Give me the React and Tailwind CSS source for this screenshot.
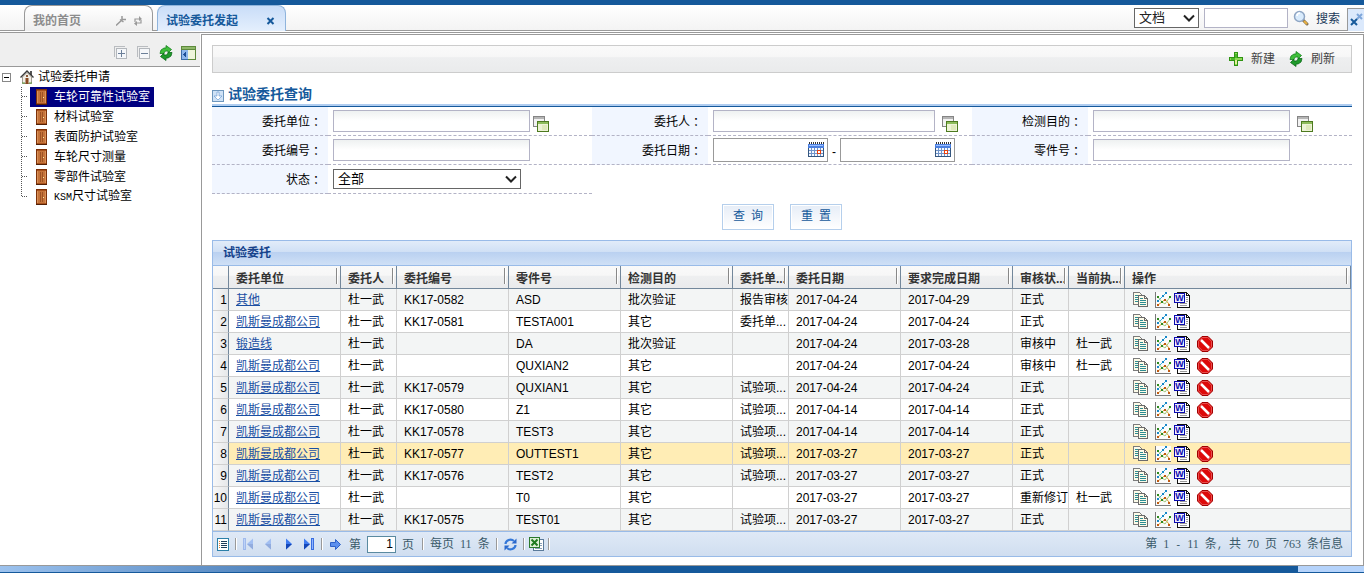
import React, { useState } from 'react';

const labs = ['车轮可靠性试验室', '材料试验室', '表面防护试验室', '车轮尺寸测量', '零部件试验室', 'KSM尺寸试验室'];

const columns = [
  { title: '委托单位', width: 'w-[112px]' },
  { title: '委托人', width: 'w-[56px]' },
  { title: '委托编号', width: 'w-[112px]' },
  { title: '零件号', width: 'w-[112px]' },
  { title: '检测目的', width: 'w-[112px]' },
  { title: '委托单...', width: 'w-[56px]' },
  { title: '委托日期', width: 'w-[112px]' },
  { title: '要求完成日期', width: 'w-[112px]' },
  { title: '审核状...', width: 'w-[56px]' },
  { title: '当前执...', width: 'w-[56px]' },
  { title: '操作', width: '' },
];

const KSM = '凯斯曼成都公司';
const rows = [
  { unit: '其他', code: 'KK17-0582', part: 'ASD', purpose: '批次验证', kind: '报告审核', date: '2017-04-24', due: '2017-04-29', status: '正式', current: '', stop: false },
  { unit: KSM, code: 'KK17-0581', part: 'TESTA001', purpose: '其它', kind: '委托单...', date: '2017-04-24', due: '2017-04-24', status: '正式', current: '', stop: false },
  { unit: '锻造线', code: '', part: 'DA', purpose: '批次验证', kind: '', date: '2017-04-24', due: '2017-03-28', status: '审核中', current: '杜一武', stop: true },
  { unit: KSM, code: '', part: 'QUXIAN2', purpose: '其它', kind: '', date: '2017-04-24', due: '2017-04-24', status: '审核中', current: '杜一武', stop: true },
  { unit: KSM, code: 'KK17-0579', part: 'QUXIAN1', purpose: '其它', kind: '试验项...', date: '2017-04-24', due: '2017-04-24', status: '正式', current: '', stop: true },
  { unit: KSM, code: 'KK17-0580', part: 'Z1', purpose: '其它', kind: '试验项...', date: '2017-04-14', due: '2017-04-14', status: '正式', current: '', stop: true },
  { unit: KSM, code: 'KK17-0578', part: 'TEST3', purpose: '其它', kind: '试验项...', date: '2017-04-14', due: '2017-04-14', status: '正式', current: '', stop: false },
  { unit: KSM, code: 'KK17-0577', part: 'OUTTEST1', purpose: '其它', kind: '试验项...', date: '2017-03-27', due: '2017-03-27', status: '正式', current: '', stop: true },
  { unit: KSM, code: 'KK17-0576', part: 'TEST2', purpose: '其它', kind: '试验项...', date: '2017-03-27', due: '2017-03-27', status: '正式', current: '', stop: true },
  { unit: KSM, code: '', part: 'T0', purpose: '其它', kind: '', date: '2017-03-27', due: '2017-03-27', status: '重新修订', current: '杜一武', stop: true },
  { unit: KSM, code: 'KK17-0575', part: 'TEST01', purpose: '其它', kind: '试验项...', date: '2017-03-27', due: '2017-03-27', status: '正式', current: '', stop: false },
];

// Digits in serif, other latin runs in half-width mono, Chinese in the normal font
const MonoText = ({ children }) => (
  <span className="whitespace-pre">
    {children.split(/(\d+|[\x20-\x2f\x3a-\x7e]+)/).map((part, i) => {
      if (i % 2 === 0) return part;
      return (
        <span
          key={i}
          className={/\d/.test(part) ? "font-['Liberation_Serif',serif]" : "font-['Liberation_Mono',monospace] text-[10px]"}
        >
          {part}
        </span>
      );
    })}
  </span>
);

const Svg = ({ w = 16, h = 16, crisp = true, children }) => (
  <svg
    width={w}
    height={h}
    viewBox={`0 0 ${w} ${h}`}
    fill="none"
    shapeRendering={crisp ? 'crispEdges' : 'auto'}
    className="block shrink-0"
    aria-hidden="true"
  >
    {children}
  </svg>
);

const RefreshIcon = () => (
  <Svg w={14} crisp={false}>
    <path d="M1 8.500L2 5L5 3H7V.5L12.500 4.500L9 8V6H6.500L4.500 8.500Z" fill="#3fbf3a" stroke="#15801f" strokeWidth=".8" />
    <path d="M13 7.500L12 11L9 13H7V15.500L1.500 11.500L5 8V10H7.500L9.500 7.500Z" fill="#1f9a2b" stroke="#0b6a18" strokeWidth=".8" />
  </Svg>
);

const ExpandIcon = ({ plus }) => (
  <Svg w={14} h={14}>
    <path d="M.5 11V.5H11" stroke="#b9bcc0" />
    <rect x="2.500" y="2.500" width="10" height="10" fill="#f5f7fa" stroke="#b3b7bc" />
    <path d={plus ? 'M4 7.500H11M7.500 4V11' : 'M4 7.500H11'} stroke="#6b7f99" />
  </Svg>
);

const PanelIcon = () => (
  <Svg w={15} h={14}>
    <rect width="15" height="14" fill="#5d8a3c" />
    <rect x="1" y="1" width="13" height="2" fill="#8fb86a" />
    <rect x="0" y="4" width="7" height="10" fill="#3b6ea8" />
    <rect x="1" y="4" width="6" height="9" fill="#8db8ec" />
    <rect x="7" y="4" width="7" height="9" fill="#eef5dc" />
    <path d="M2 8.500L5 5.500V11.500Z" fill="#1d4f96" />
  </Svg>
);

const HouseIcon = () => (
  <Svg w={14} h={14} crisp={false}>
    <rect x="10" y="1" width="2" height="4" fill="#555" />
    <path d="M2.500 7L7 2.500L11.500 7V13.500H2.500Z" fill="#f1eee6" stroke="#8b8577" strokeWidth=".8" />
    <path d="M.5 7.500L7 1L13.500 7.500" stroke="#3a3a3a" strokeWidth="1.400" />
    <rect x="5.500" y="8" width="3" height="6" fill="#8a4a22" />
    <rect x="6" y="5" width="2" height="2" fill="#8a5a3a" />
    <path d="M2 13H5M9 13H12" stroke="#5d9a3a" />
  </Svg>
);

const DoorIcon = () => (
  <Svg w={11} h={16}>
    <rect x=".5" y=".5" width="10" height="15" fill="#a9531d" stroke="#7d3008" />
    <rect x="2" y="2" width="7" height="12" fill="#c5733a" />
    <path d="M4.500 3V13M6.500 3V13" stroke="#9c5223" />
    <path d="M1.500 2V14M9.500 2V14" stroke="#d9925a" />
    <rect x="7" y="8" width="1" height="1" fill="#ffe9a0" />
    <path d="M0 15.500H11" stroke="#521f06" />
  </Svg>
);

const LookupIcon = () => (
  <Svg>
    <rect x=".5" y=".5" width="11" height="10" fill="#f2f2f2" stroke="#858585" />
    <rect x="1" y="1" width="10" height="2" fill="#b5b5b5" />
    <rect x="4.500" y="5.500" width="11" height="10" fill="#edf3d6" stroke="#4d7a1f" />
    <rect x="5" y="6" width="10" height="2" fill="#8dbb5a" />
    <rect x="9" y="9" width="5" height="5" fill="#dfe9bb" />
  </Svg>
);

const CalendarIcon = () => (
  <Svg>
    <path d="M1 1H16" stroke="#333" strokeWidth="2" strokeDasharray="1 1" />
    <rect x="0" y="2" width="16" height="13" fill="#f4f8ff" />
    <rect x="0" y="2" width="16" height="4" fill="#4a7fe0" />
    <rect x="1" y="3" width="14" height="1" fill="#9cc0ff" />
    <path d="M0 8.500H16M0 11.500H16M3.500 6V15M6.500 6V15M9.500 6V15M12.500 6V15" stroke="#6f93c8" />
    <path d="M.5 6V15M0 14.500H16M15.500 6V15" stroke="#34567f" />
    <rect x="9.500" y="8.500" width="3" height="3" fill="#fff" stroke="#e8400c" />
  </Svg>
);

const MagnifierIcon = () => (
  <Svg crisp={false}>
    <path d="M10 10L14 14" stroke="#7a6a50" strokeWidth="3" strokeLinecap="round" />
    <path d="M11.500 11.500L13.500 13.500" stroke="#e8b040" strokeWidth="2" strokeLinecap="round" />
    <circle cx="6.500" cy="6.500" r="5" fill="#d9ebfc" stroke="#8fa6c4" strokeWidth="1.500" />
    <path d="M4 6a3 3 0 0 1 3-3" stroke="#fff" strokeWidth="1.500" />
  </Svg>
);

const PlusIcon = () => (
  <Svg w={14} h={14}>
    <path d="M5.500 .5H8.500V5.500H13.500V8.500H8.500V13.500H5.500V8.500H.5V5.500H5.500Z" fill="#8fd858" stroke="#2f9412" />
    <path d="M2 7H6M7 2V6" stroke="#4cb82a" strokeWidth="2" />
    <path d="M7 8V12" stroke="#e4ef9a" strokeWidth="2" />
  </Svg>
);

const CopyIcon = () => (
  <Svg>
    <path d="M.5 .5H6.500L9.500 3.500V12.500H.5Z" fill="#fdfbe8" stroke="#7b7b7b" />
    <path d="M2 3.500H5M2 5.500H5M2 7.500H5M2 9.500H5" stroke="#2c8c92" />
    <path d="M5.500 3.500H11.500L14.500 6.500V14.500H5.500Z" fill="#fdfbe8" stroke="#6b6b6b" />
    <path d="M7 6.500H10M7 8.500H13M7 10.500H13M7 12.500H13" stroke="#2c8c92" />
    <path d="M11.500 4V6.500H14" stroke="#6b6b6b" />
  </Svg>
);

const ChartIcon = () => (
  <Svg>
    <rect width="16" height="16" fill="#fbfbfb" />
    <path d="M.5 0V15.500H16" stroke="#7a7a7a" />
    <g shapeRendering="auto">
      <path d="M3 9L8 4L11 1" stroke="#36b4e0" />
      <path d="M3 13L10 7.500L15 13" stroke="#d99a2c" />
      <path d="M3 5L7 10L10 12L15 5" stroke="#a5cc7c" />
    </g>
    <g fill="#1787c8">
      <rect x="10" y="0" width="2" height="2" />
      <rect x="7" y="3" width="2" height="2" />
      <rect x="2" y="8" width="2" height="2" />
    </g>
    <g fill="#2c8a1e">
      <rect x="2" y="4" width="2" height="2" />
      <rect x="14" y="4" width="2" height="2" />
      <rect x="6" y="9" width="2" height="2" />
    </g>
    <g fill="#c05a10">
      <rect x="2" y="12" width="2" height="2" />
      <rect x="9" y="7" width="2" height="2" />
      <rect x="13" y="12" width="2" height="2" />
    </g>
  </Svg>
);

const WordIcon = () => (
  <Svg>
    <path d="M3.500 .5H12.500L15.500 3.500V15.500H3.500Z" fill="#fff" stroke="#111" />
    <path d="M12.500 1V3.500H15" stroke="#111" />
    <path d="M12 5.500H14M12 7.500H14M12 9.500H14M6 11.500H13M6 13.500H13" stroke="#9a9a9a" />
    <rect x=".5" y="1.500" width="10" height="9" fill="#eef0ff" stroke="#0a0ab0" />
    <text x="5.500" y="9" textAnchor="middle" fontSize="9" fontWeight="700" fontFamily="Liberation Sans, sans-serif" fill="#0a0ab0">W</text>
  </Svg>
);

const StopIcon = () => (
  <Svg crisp={false}>
    <path d="M5 .5H11L15.500 5V11L11 15.500H5L.5 11V5Z" fill="#dd0a0a" stroke="#a00000" />
    <path d="M5.300 1.500H10.700L14.500 5.300V10.700L10.700 14.500H5.300L1.500 10.700V5.300Z" stroke="#f08080" strokeWidth=".6" />
    <path d="M4 4L12 12" stroke="#fff" strokeWidth="2.500" />
  </Svg>
);

const ListIcon = () => (
  <Svg w={12} h={13}>
    <rect x=".5" y=".5" width="11" height="12" fill="#fff" stroke="#2b7fa8" />
    <path d="M4 3.500H10M4 5.500H10M4 7.500H10M4 9.500H10" stroke="#1d3c5a" />
    <path d="M2.500 3V10" stroke="#e08030" strokeDasharray="1 1" />
  </Svg>
);

const PageArrow = ({ flip, bar, dim }) => (
  <Svg w={11} h={12} crisp={false}>
    <g transform={flip ? 'translate(11 0) scale(-1 1)' : undefined} opacity={dim ? 0.35 : 1}>
      <path d={bar ? 'M1 .5L7 6L1 11.500Z' : 'M3 .5L9 6L3 11.500Z'} fill="#3f7bf0" />
      <path d={bar ? 'M1 6H7L1 11.500Z' : 'M3 6H9L3 11.500Z'} fill="#1447b8" />
      {bar && <rect x="8" y="0" width="3" height="12" fill="#3a6ee0" />}
      {bar && <rect x="9" y="1" width="1" height="10" fill="#8db4ff" />}
    </g>
  </Svg>
);

const GoIcon = () => (
  <Svg w={11} h={11} crisp={false}>
    <path d="M.5 3.500H5.500V.5L10.500 5.500L5.500 10.500V7.500H.5Z" fill="#5c90ee" stroke="#2f62c8" />
  </Svg>
);

const ReloadIcon = () => (
  <Svg w={13} h={13} crisp={false}>
    <path d="M1.500 6a5 4.500 0 0 1 8.500-3M11.500 7a5 4.500 0 0 1-8.500 3" stroke="#3478d8" strokeWidth="2.200" />
    <path d="M12.500 .5V5.500H7.500ZM.5 12.500V7.500H5.500Z" fill="#2a68cc" />
  </Svg>
);

const ExcelIcon = () => (
  <Svg w={15} h={14}>
    <rect x="4.500" y="2.500" width="10" height="11" fill="#fff" stroke="#5a7a9a" />
    <path d="M11 6.500H13M11 8.500H13M6 11.500H13" stroke="#8aa0b8" />
    <rect x=".5" y=".5" width="10" height="10" fill="#dff0d8" stroke="#2c7a2c" />
    <path d="M2.500 2.500L8.500 8.500M8.500 2.500L2.500 8.500" stroke="#1e7a1e" strokeWidth="2" shapeRendering="auto" />
  </Svg>
);

const Chevron = () => (
  <span className="pointer-events-none absolute inset-y-0 right-1 flex items-center">
    <Svg w={12} h={8} crisp={false}>
      <path d="M1 1.500L6 6.500L11 1.500" stroke="#222" strokeWidth="2" />
    </Svg>
  </span>
);

const Tab = ({ title, active, children }) => (
  <div
    className={`flex h-[26px] w-[129px] items-center justify-between rounded-t-lg border border-b-0 px-2 pt-1 text-xs leading-4 font-bold ${
      active
        ? 'border-[#8fb4dc] bg-linear-to-b from-[#c9ddf8] to-[#e4effd] text-[#15599b]'
        : 'border-[#999] bg-linear-to-b from-white to-[#eee] text-[#8c8c8c]'
    }`}
  >
    <button type="button">{title}</button>
    {children}
  </div>
);

const TopBar = () => (
  <header className="border-t-[5px] border-[#15599b]">
    <div className="flex h-[26px] items-end bg-linear-to-b from-white to-[#f3f3f3]">
      <div className="h-px w-6 bg-[#999]" />
      <Tab title="我的首页">
        <span className="flex gap-2 pr-0.5">
          <button type="button" aria-label="设置">
            <Svg w={10} h={10} crisp={false}>
              <path d="M0 9.500L7 3M4 3.500L7.500 6M6 0V3.500H10" stroke="#999" strokeWidth="1.500" />
            </Svg>
          </button>
          <button type="button" aria-label="刷新首页">
            <Svg w={8} h={10} crisp={false}>
              <path d="M1 6V3H6M7 4V7H2" stroke="#999" strokeWidth="1.200" />
              <path d="M5 0L8 3L5 5ZM3 5L0 7.500L3 10Z" fill="#999" />
            </Svg>
          </button>
        </span>
      </Tab>
      <div className="h-px w-1 bg-[#999]" />
      <Tab title="试验委托发起" active>
        <button type="button" aria-label="关闭" className="pr-0.5">
          <Svg w={9} h={8} crisp={false}>
            <path d="M1.500 1L7.500 7M7.500 1L1.500 7" stroke="#15599b" strokeWidth="2" />
          </Svg>
        </button>
      </Tab>
      <div className="flex h-full flex-1 items-center justify-end border-b border-[#999] text-[#1d3c5a]">
        <div className="relative mr-[5px]">
          <select aria-label="类型" className="block h-5 w-[65px] appearance-none border border-[#666] bg-white pl-1 text-[13px] leading-4 text-[#222]">
            <option>文档</option>
          </select>
          <Chevron />
        </div>
        <input aria-label="关键字" className="mr-1 h-5 w-[84px] border border-[#b3b3c6] bg-white px-1 text-xs" />
        <button type="button" className="flex items-center gap-[7px] pr-[7px] pl-px text-xs leading-4">
          <MagnifierIcon />
          <span className="pt-0.5">搜索</span>
        </button>
      </div>
      <button type="button" aria-label="全部关闭" className="h-[23px] w-[17px] border border-r-0 border-b-0 border-[#999] bg-[#dbe9fc]">
        <Svg w={16} h={16} crisp={false}>
          <path d="M9 2L14 7M14 2L9 7" stroke="#7ea6da" strokeWidth="2" />
          <path d="M3 7L9 13M9 7L3 13" stroke="#15599b" strokeWidth="2" />
        </Svg>
      </button>
    </div>
    <div className="mt-px h-px bg-[#999]" />
  </header>
);

const Sidebar = () => {
  const [selected, setSelected] = useState(0);

  return (
    <aside className="w-[200px] shrink-0 text-xs leading-4 text-black">
      <div className="flex h-[34px] items-center justify-end gap-2 border-b border-[#999] bg-[#efefef] pt-1.5 pr-1">
        <button type="button" aria-label="展开"><ExpandIcon plus /></button>
        <button type="button" aria-label="收起" className="ml-px"><ExpandIcon /></button>
        <button type="button" aria-label="刷新树"><RefreshIcon /></button>
        <button type="button" aria-label="隐藏面板"><PanelIcon /></button>
      </div>
      <div className="flex h-5 items-center pl-0.5">
        <button type="button" aria-label="折叠" className="mr-[9px]">
          <Svg w={9} h={9}>
            <rect x=".5" y=".5" width="8" height="8" fill="#fff" stroke="#888" />
            <path d="M2 4.500H7" stroke="#000" />
          </Svg>
        </button>
        <HouseIcon />
        <span className="pl-1">试验委托申请</span>
      </div>
      <ul>
        {labs.map((lab, i) => (
          <li key={lab} className="flex h-5 items-center pl-[21px]">
            <Svg w={9} h={20}>
              <path d={i === labs.length - 1 ? 'M.5 0V10' : 'M.5 0V20'} stroke="#555" strokeDasharray="1 1" />
              <path d="M1 9.500H7" stroke="#555" strokeDasharray="1 1" />
            </Svg>
            <button
              type="button"
              onClick={() => setSelected(i)}
              className={`flex h-5 items-center gap-[7px] pr-1 pl-1.5 ${selected === i ? 'bg-[#000080] text-white' : ''}`}
            >
              <DoorIcon />
              <MonoText>{lab}</MonoText>
            </button>
          </li>
        ))}
      </ul>
    </aside>
  );
};

const Field = ({ id, label, children }) => (
  <div className="flex h-[29px]">
    <label
      htmlFor={id}
      className="flex w-[116px] shrink-0 items-center justify-end border-b border-dashed border-[#b3b3c6] bg-[#f1f6ff] pt-0.5 pr-1.5"
    >
      {label}
      <span className="font-['Noto_Sans_CJK_TC',sans-serif]">：</span>
    </label>
    <div className="flex flex-1 items-center border-b border-dashed border-[#b3b3c6] pl-[5px]">{children}</div>
  </div>
);

const TextBox = ({ id, wide }) => (
  <input
    id={id}
    className={`h-[22px] border border-[#b3b3c6] bg-linear-to-b from-[#eef1f1] to-white to-50% px-1 ${wide ? 'w-[222px]' : 'w-[197px]'}`}
  />
);

const LookupButton = ({ label, near }) => (
  <button type="button" aria-label={label} className={`pt-1.5 ${near ? 'pl-[3px]' : 'pl-[7px]'}`}>
    <LookupIcon />
  </button>
);

const DateBox = ({ id, label }) => (
  <div className="flex h-6 w-[115px] items-center border border-[#999] bg-white pr-[3px]">
    <input id={id} aria-label={label} className="h-full w-full min-w-0 px-1" />
    <button type="button" aria-label={`选择${label}`}><CalendarIcon /></button>
  </div>
);

const QueryForm = () => (
  <form onSubmit={(e) => e.preventDefault()}>
    <div className="border-b border-[#15599b] pt-[11px]">
      <h2 className="flex h-[22px] items-end gap-1 border-b-2 border-[#b0cdf0] text-sm leading-5 font-bold text-[#15599b]">
        <span className="pb-0.5">
          <Svg w={12} h={12}>
            <rect x=".5" y=".5" width="11" height="11" fill="#cfe2f6" stroke="#6d96bd" />
            <path d="M5 2H7V6H10L6 10L2 6H5Z" fill="#fff" stroke="#5a92d0" strokeWidth=".6" shapeRendering="auto" />
          </Svg>
        </span>
        <span>试验委托查询</span>
      </h2>
    </div>
    <div className="grid grid-cols-3">
      <Field id="unit" label="委托单位">
        <TextBox id="unit" />
        <LookupButton label="选择委托单位" near />
      </Field>
      <Field id="person" label="委托人">
        <TextBox id="person" wide />
        <LookupButton label="选择委托人" />
      </Field>
      <Field id="purpose" label="检测目的">
        <TextBox id="purpose" />
        <LookupButton label="选择检测目的" />
      </Field>
      <Field id="code" label="委托编号">
        <TextBox id="code" />
      </Field>
      <Field id="from" label="委托日期">
        <DateBox id="from" label="开始日期" />
        <span className="px-1 pt-1">-</span>
        <DateBox id="to" label="结束日期" />
      </Field>
      <Field id="part" label="零件号">
        <TextBox id="part" />
      </Field>
      <Field id="state" label="状态">
        <div className="relative">
          <select id="state" className="block h-5 w-[188px] appearance-none border border-[#666] bg-white pl-1 text-[13px] leading-4">
            <option>全部</option>
          </select>
          <Chevron />
        </div>
      </Field>
    </div>
    <div className="flex justify-center gap-4 py-2.5">
      {['查 询', '重 置'].map((text) => (
        <button
          key={text}
          type="button"
          className="h-[26px] w-[52px] border border-[#b5cfec] bg-linear-to-b from-[#e6edf7] to-white text-[#15599b] inset-ring inset-ring-white"
        >
          <MonoText>{text}</MonoText>
        </button>
      ))}
    </div>
  </form>
);

const Separator = () => <span className="h-3 w-0.5 border-r border-l border-r-white border-l-[#999]" />;

const Pager = () => {
  const [page, setPage] = useState('1');

  return (
    <div className="flex h-[25px] items-center justify-between border-t border-[#99bbe8] bg-linear-to-b from-[#dfe9f6] to-[#d0def0] pr-2 pl-1 text-[#3a5a6a]">
      <div className="flex items-center">
        <button type="button" aria-label="列表"><ListIcon /></button>
        <span className="flex w-[14px] justify-center"><Separator /></span>
        <div className="flex gap-[9px]">
          <button type="button" aria-label="首页"><PageArrow flip bar dim /></button>
          <button type="button" aria-label="上一页"><PageArrow flip dim /></button>
          <button type="button" aria-label="下一页"><PageArrow /></button>
          <button type="button" aria-label="末页"><PageArrow bar /></button>
        </div>
        <span className="flex w-4 justify-center"><Separator /></span>
        <button type="button" aria-label="跳转"><GoIcon /></button>
        <label htmlFor="page" className="pt-0.5 pr-1.5 pl-2">第</label>
        <input
          id="page"
          value={page}
          onChange={(e) => setPage(e.target.value)}
          className="h-[17px] w-[29px] border border-[#5a8aa0] bg-white px-0.5 text-right text-black"
        />
        <span className="pt-0.5 pr-2 pl-1.5">页</span>
        <Separator />
        <span className="px-1.5 pt-0.5"><MonoText>每页 11 条</MonoText></span>
        <Separator />
        <button type="button" aria-label="刷新列表" className="px-1.5"><ReloadIcon /></button>
        <Separator />
        <button type="button" aria-label="导出" className="px-1"><ExcelIcon /></button>
        <Separator />
      </div>
      <span className="pt-0.5"><MonoText>第 1 - 11 条, 共 70 页 763 条信息</MonoText></span>
    </div>
  );
};

const cell = 'overflow-hidden border-r border-b border-[#d0d0d0] p-0 pl-[7px] whitespace-nowrap';

const RequestGrid = () => (
  <section className="border border-[#99bbe8]">
    <h3 className="h-[25px] border-b border-[#99bbe8] bg-[linear-gradient(#e2ecf9,#d0e0f5_45%,#b9d0f0_45%,#cfe0f6)] pl-2.5 leading-6 font-bold text-[#15428b]">
      试验委托
    </h3>
    <table className="w-full table-fixed border-separate border-spacing-0">
      <thead>
        <tr className="h-[23px] bg-[linear-gradient(#f9f9f9,#f7f7f7_40%,#eeeff0_45%,#e9eaec)] text-[#333]">
          <th aria-label="序号" className="w-4 border-r border-b border-[#73879b] p-0" />
          {columns.map((col) => (
            <th key={col.title} className={`relative border-r border-b border-[#73879b] p-0 pl-[7px] text-left whitespace-nowrap ${col.width}`}>
              <span className="block overflow-hidden pt-1">{col.title}</span>
              <span className="absolute top-0.5 right-0.5 h-4 w-0.5 border-r border-l border-r-white border-l-[#888]" />
            </th>
          ))}
        </tr>
      </thead>
      <tbody>
        {rows.map((row, i) => (
          <tr key={i} className={`h-[22px] ${i === 7 ? 'bg-[#ffedb5]' : i % 2 ? 'bg-white' : 'bg-[#f3f5f5]'}`}>
            <td className="border-r border-b border-r-[#73879b] border-b-[#d0d0d0] bg-linear-to-r from-[#f8f8f8] to-[#e6e8ea] p-0 text-right">
              <span className="flex justify-end pr-px">{i + 1}</span>
            </td>
            <td className={cell}>
              <a href="#" className="text-[#1a4fa3] underline">{row.unit}</a>
            </td>
            <td className={cell}>杜一武</td>
            <td className={cell}>{row.code}</td>
            <td className={cell}>{row.part}</td>
            <td className={cell}>{row.purpose}</td>
            <td className={cell}>{row.kind}</td>
            <td className={cell}>{row.date}</td>
            <td className={cell}>{row.due}</td>
            <td className={cell}>{row.status}</td>
            <td className={cell}>{row.current}</td>
            <td className={cell}>
              <div className="flex items-center">
                <button type="button" aria-label="复制" className="mr-1.5 pl-px"><CopyIcon /></button>
                <button type="button" aria-label="图表" className="mr-[3px]"><ChartIcon /></button>
                <button type="button" aria-label="文档"><WordIcon /></button>
                {row.stop && <button type="button" aria-label="终止" className="ml-[7px]"><StopIcon /></button>}
              </div>
            </td>
          </tr>
        ))}
      </tbody>
    </table>
    <Pager />
  </section>
);

const App = () => {
  return (
    <div className="bg-white font-['Liberation_Sans','Noto_Sans_CJK_SC',sans-serif] text-xs leading-4 text-black">
      <TopBar />
      <div className="flex">
        <Sidebar />
        <main className="mt-px ml-px min-w-0 flex-1 border-t border-r border-l border-[#999] pt-2.5 pr-[11px] pb-2 pl-2.5">
          <div className="flex h-7 items-center justify-end gap-3.5 border border-[#ccc] bg-[linear-gradient(#fafafa,#f7f7f7_40%,#eeeff0_45%,#eaebec)] pr-4 text-[#444]">
            <button type="button" className="flex items-center gap-2"><PlusIcon />新建</button>
            <button type="button" className="flex items-center gap-2"><RefreshIcon />刷新</button>
          </div>
          <QueryForm />
          <RequestGrid />
        </main>
      </div>
      <footer className="flex h-2 border-t border-b border-t-[#999] border-b-[#15599b]">
        <div className="flex-1 bg-linear-to-r from-[#9cc2ee] to-[#15599b] to-35%" />
        <div className="w-[66px] bg-[#b5d3fb]" />
      </footer>
    </div>
  );
};

export default App;
